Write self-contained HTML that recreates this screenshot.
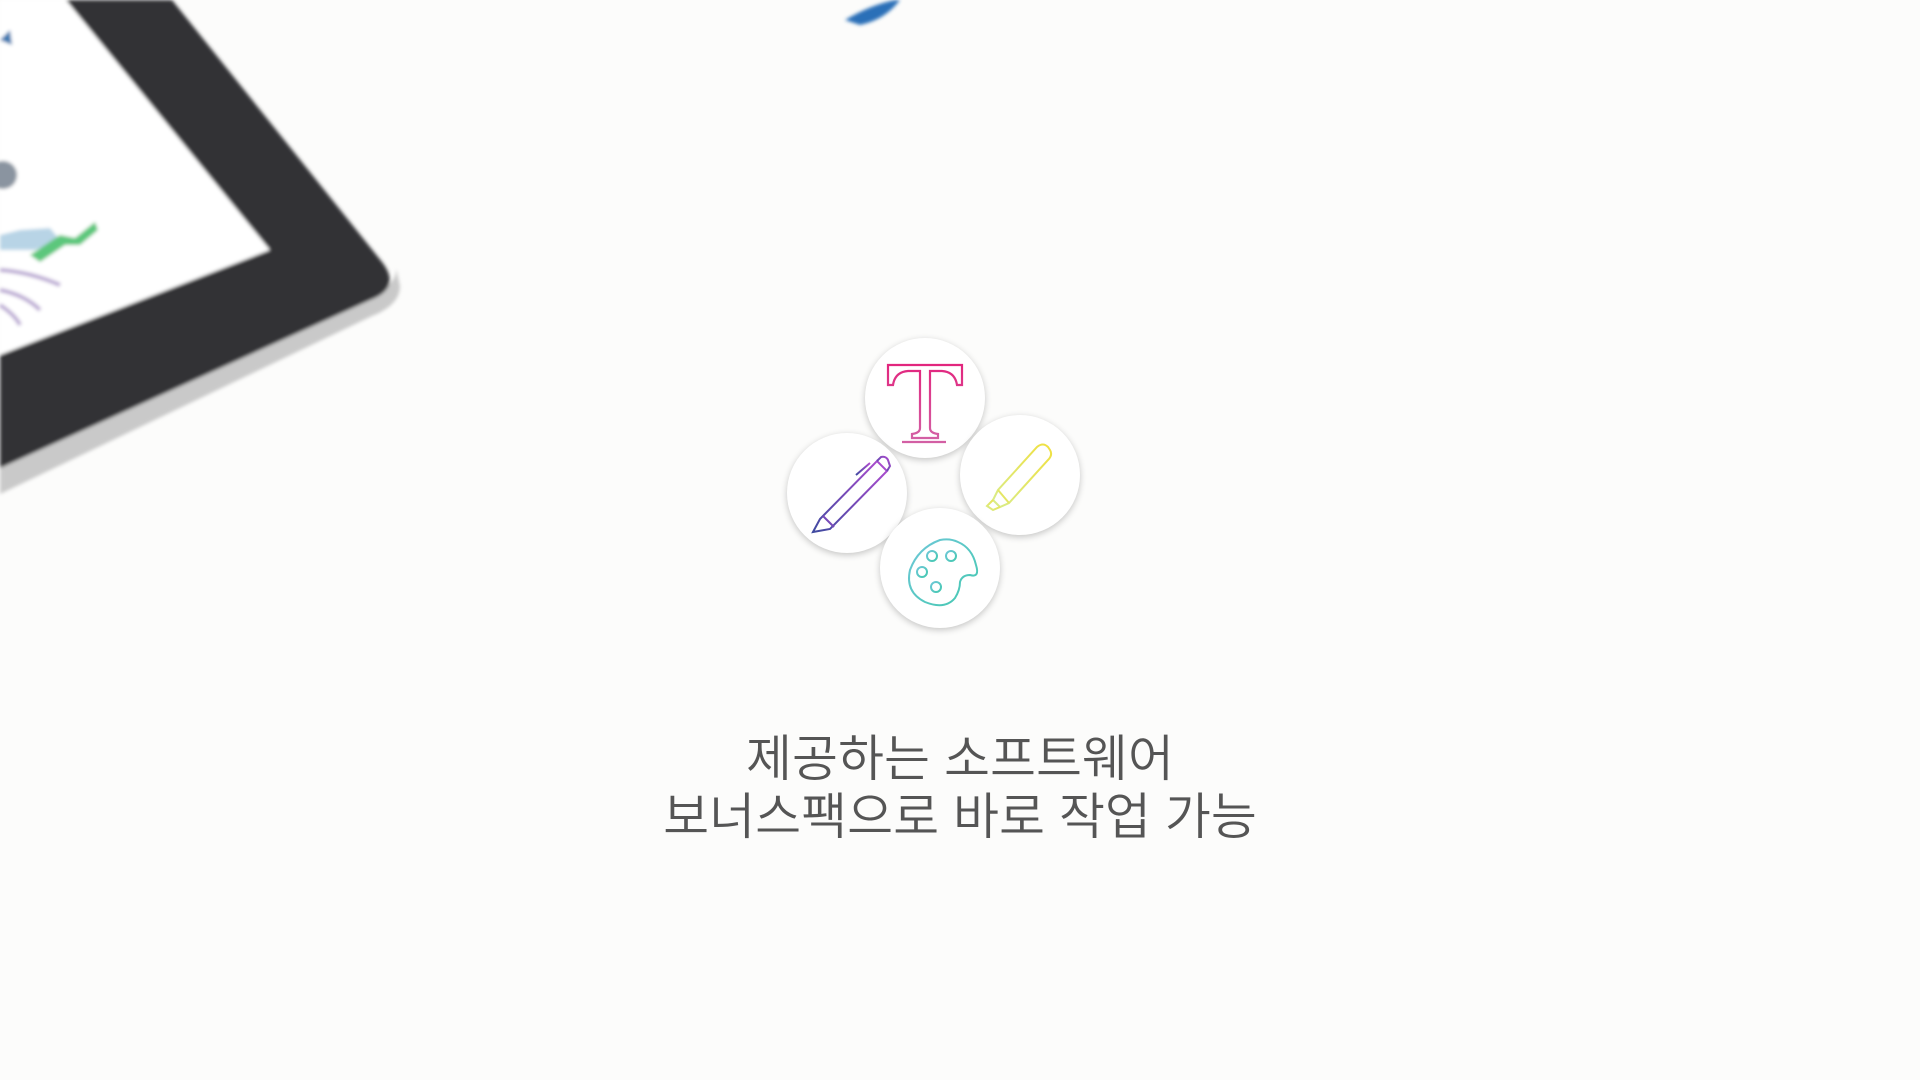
<!DOCTYPE html>
<html><head><meta charset="utf-8"><style>
html,body{margin:0;padding:0;width:1920px;height:1080px;overflow:hidden;background:#fcfcfb;}
.c{position:absolute;width:120px;height:120px;border-radius:50%;background:#fff;box-shadow:0 2px 7px rgba(0,0,0,0.22);}
.t{position:absolute;left:0;width:1920px;text-align:center;top:730px;font-family:"Liberation Sans","Noto Sans CJK KR",sans-serif;font-size:50px;line-height:58px;color:#555;font-weight:350;}
</style></head><body>
<svg width="1920" height="1080" style="position:absolute;left:0;top:0">
<defs><filter id="b"><feGaussianBlur stdDeviation="1.8"/></filter></defs>
<g filter="url(#b)">
<path d="M0,0 L66,0 L270,250 L0,355 Z" fill="#fff"/>
<path d="M0,462 L370,296 Q398,284 396,268 L400,286 Q400,305 372,316 L0,494 Z" fill="#c9c9c9"/>
<path d="M66,0 L172,0 L382,262 Q402,288 370,300 L0,468 L0,355 L270,250 Z" fill="#323334"/>
<circle cx="3" cy="175" r="14" fill="#8a94a0"/>
<path d="M0,235 L20,230 L50,228 L60,240 L35,250 L0,250Z" fill="#b8d4e6"/>
<path d="M30,255 L60,235 L75,238 L95,222 L98,230 L80,245 L65,245 L40,262Z" fill="#5cc77b"/>
<path d="M0,270 Q30,272 60,285 M0,290 Q25,295 40,310 M0,305 Q15,315 20,325" stroke="#b9a7d2" stroke-width="4" fill="none"/>
<path d="M0,40 L10,30 L12,45 Z" fill="#3a78b0"/>
<path d="M845,20 Q870,5 895,0 L900,0 Q885,20 860,25 Z" fill="#2c6fb8"/>
</g>
</svg>
<div class="c" style="left:865px;top:338px"></div>
<div class="c" style="left:787px;top:433px"></div>
<div class="c" style="left:960px;top:415px"></div>
<div class="c" style="left:880px;top:508px"></div>
<svg width="1920" height="1080" style="position:absolute;left:0;top:0">
<defs>
<linearGradient id="gT" x1="0" y1="0" x2="0" y2="1"><stop offset="0" stop-color="#e2267e"/><stop offset="1" stop-color="#d35fa4"/></linearGradient>
<linearGradient id="gP" x1="1" y1="0" x2="0" y2="1"><stop offset="0" stop-color="#b04bd0"/><stop offset="1" stop-color="#3f4aa0"/></linearGradient>
<linearGradient id="gH" x1="1" y1="0" x2="0" y2="1"><stop offset="0" stop-color="#f0e040"/><stop offset="1" stop-color="#d8ec8a"/></linearGradient>
<linearGradient id="gC" x1="0" y1="0" x2="1" y2="1"><stop offset="0" stop-color="#6fc8d8"/><stop offset="1" stop-color="#44c8b0"/></linearGradient>
</defs>
<path d="M888,365 L962,365 L962,385 L957,385 Q955,372 942,371 L930,371 L930,428 Q930,433 938,434 L938,438 L912,438 L912,434 Q920,433 920,428 L920,371 L908,371 Q895,372 893,385 L888,385 Z" fill="none" stroke="url(#gT)" stroke-width="2.2"/>
<line x1="902" y1="442" x2="946" y2="442" stroke="#d35fa4" stroke-width="2.2"/>
<g fill="none" stroke="url(#gP)" stroke-width="2">
<path d="M813,532 L820,519 L877,461 L887,471 L830,529 Z"/>
<path d="M877,461 L881,457 Q886,456 888,460 L890,466 L887,471"/>
<path d="M823,516 L834,527"/>
<path d="M856,475 L870,463"/>
</g>
<g fill="none" stroke="url(#gH)" stroke-width="2">
<path d="M993,500 L998,490 L1037,447 Q1043,442 1048,447 L1050,450 Q1053,455 1048,460 L1009,503 L1000,507 Z"/>
<path d="M998,490 L1009,503"/>
<path d="M993,500 L987,506 L993,510 L1000,507"/>
</g>
<g fill="none" stroke="url(#gC)" stroke-width="2">
<path d="M940,540 Q918,548 910,570 Q905,592 925,602 Q945,610 955,598 Q960,590 960,582 Q962,575 970,575 Q980,578 976,565 Q972,548 958,542 Q950,538 940,540Z"/>
<circle cx="932" cy="556" r="5"/><circle cx="951" cy="556" r="5"/><circle cx="922" cy="572" r="5"/><circle cx="936" cy="587" r="5"/>
</g>
</svg>
<div class="t">제공하는 소프트웨어<br>보너스팩으로 바로 작업 가능</div>
</body></html>
